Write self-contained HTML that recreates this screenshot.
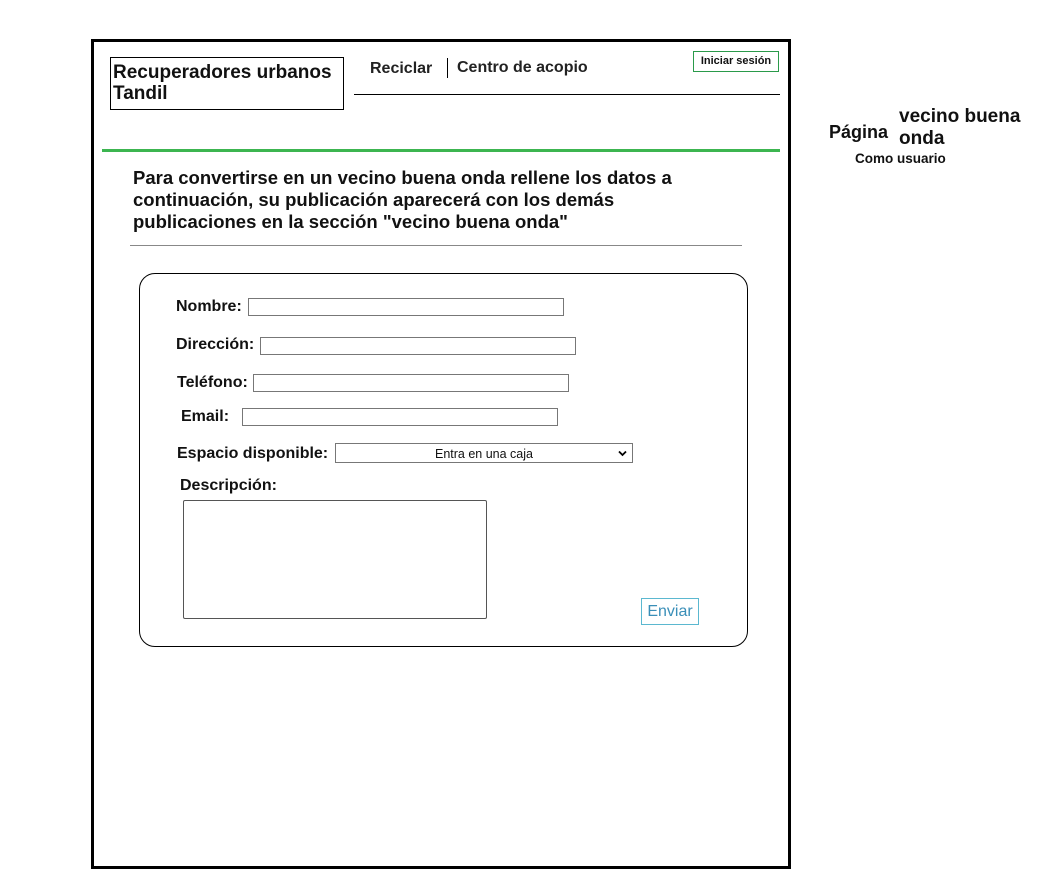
<!DOCTYPE html>
<html><head><meta charset="utf-8"><style>
*{margin:0;padding:0;box-sizing:border-box}
body{width:1042px;height:892px;background:#fff;position:relative;font-family:"Liberation Sans",Arial,sans-serif;color:#111;overflow:hidden}
.a{position:absolute}
.b{font-weight:bold}
.in{position:absolute;border:1px solid #777;height:18px;background:#fff}
.lb{position:absolute;font-weight:bold;font-size:16px}
</style></head><body>
<div class="a" style="left:91px;top:39px;width:700px;height:830px;border:3px solid #000"></div>
<div class="a b" style="left:110px;top:57px;width:234px;height:53px;border:1px solid #000;font-size:19px;line-height:21px;padding:4px 2px">Recuperadores urbanos Tandil</div>
<div class="a b" style="left:370px;top:60px;font-size:16px;color:#222">Reciclar</div>
<div class="a" style="left:447px;top:58px;width:1px;height:20px;background:#000"></div>
<div class="a b" style="left:457px;top:59px;font-size:16px;color:#222">Centro de acopio</div>
<div class="a" style="left:354px;top:94px;width:426px;height:1px;background:#000"></div>
<div class="a b" style="left:693px;top:51px;width:86px;height:21px;border:1px solid #2a9a4a;font-size:11px;text-align:center;line-height:18px">Iniciar sesión</div>
<div class="a" style="left:102px;top:149px;width:678px;height:3px;background:#3cb550"></div>
<div class="a b" style="left:133px;top:167px;width:580px;font-size:18.5px;line-height:22px">Para convertirse en un vecino buena onda rellene los datos a continuación, su publicación aparecerá con los demás publicaciones en la sección "vecino buena onda"</div>
<div class="a" style="left:130px;top:245px;width:612px;height:1px;background:#888"></div>
<div class="a" style="left:139px;top:273px;width:609px;height:374px;border:1px solid #000;border-radius:16px"></div>
<div class="lb" style="left:176px;top:298px">Nombre:</div><div class="in" style="left:248px;top:298px;width:316px"></div>
<div class="lb" style="left:176px;top:336px">Dirección:</div><div class="in" style="left:260px;top:337px;width:316px"></div>
<div class="lb" style="left:177px;top:374px">Teléfono:</div><div class="in" style="left:253px;top:374px;width:316px"></div>
<div class="lb" style="left:181px;top:408px">Email:</div><div class="in" style="left:242px;top:408px;width:316px"></div>
<div class="lb" style="left:177px;top:445px">Espacio disponible:</div>
<div class="in" style="left:335px;top:443px;width:298px;height:20px;font-size:12.5px;text-align:center;line-height:20px">Entra en una caja<svg style="position:absolute;right:5px;top:6px" width="9" height="7" viewBox="0 0 9 7"><path d="M1 1.5L4.5 5L8 1.5" fill="none" stroke="#000" stroke-width="1.8"/></svg></div>
<div class="lb" style="left:180px;top:477px">Descripción:</div>
<div class="a" style="left:183px;top:500px;width:304px;height:119px;border:1px solid #555;border-radius:2px"></div>
<div class="a" style="left:641px;top:598px;width:58px;height:27px;border:1px solid #5bb8d0;color:#3a8fb8;font-size:16px;text-align:center;line-height:25px">Enviar</div>
<div class="a b" style="left:829px;top:122px;font-size:18px">Página</div>
<div class="a b" style="left:899px;top:106px;font-size:19px;line-height:22px;width:145px">vecino buena onda</div>
<div class="a b" style="left:855px;top:151px;font-size:13.5px">Como usuario</div>
</body></html>
